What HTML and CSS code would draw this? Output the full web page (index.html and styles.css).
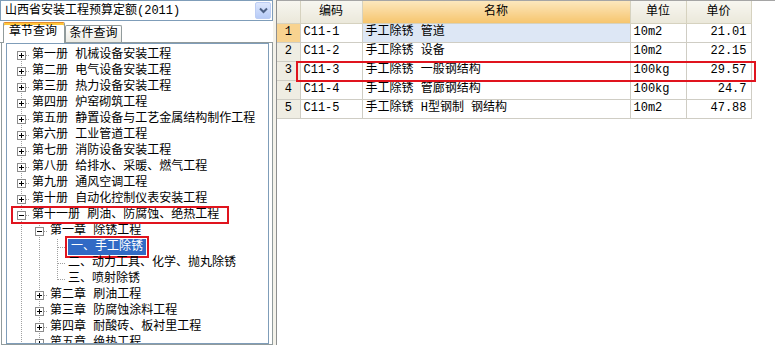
FILE: index.html
```html
<!DOCTYPE html>
<html lang="zh-CN">
<head>
    <meta charset="UTF-8">
    <title>定额查询</title>
    <link rel="stylesheet" href="styles.css">
</head>
<body>
    <svg class="defs" width="0" height="0">
        <defs>
            <symbol id="v" viewBox="0 0 18 16">
                <line class="dot" x1="9.5" y1="0" x2="9.5" y2="16"/>
            </symbol>
            <symbol id="t" viewBox="0 0 18 16">
                <line class="dot" x1="9.5" y1="0" x2="9.5" y2="16"/>
                <line class="dot" x1="10" y1="8.5" x2="18" y2="8.5"/>
            </symbol>
            <symbol id="e" viewBox="0 0 18 16">
                <line class="dot" x1="9.5" y1="0" x2="9.5" y2="9"/>
                <line class="dot" x1="10" y1="8.5" x2="18" y2="8.5"/>
            </symbol>
            <symbol id="fp" viewBox="0 0 18 16">
                <line class="dot" x1="9.5" y1="8" x2="9.5" y2="16"/>
                <line class="dot" x1="10" y1="8.5" x2="18" y2="8.5"/>
                <rect class="box" x="5.5" y="4.5" width="8" height="8"/>
                <line class="sign" x1="7" y1="8.5" x2="12" y2="8.5"/>
                <line class="sign" x1="9.5" y1="6" x2="9.5" y2="11"/>
            </symbol>
            <symbol id="tp" viewBox="0 0 18 16">
                <line class="dot" x1="9.5" y1="0" x2="9.5" y2="16"/>
                <line class="dot" x1="10" y1="8.5" x2="18" y2="8.5"/>
                <rect class="box" x="5.5" y="4.5" width="8" height="8"/>
                <line class="sign" x1="7" y1="8.5" x2="12" y2="8.5"/>
                <line class="sign" x1="9.5" y1="6" x2="9.5" y2="11"/>
            </symbol>
            <symbol id="tm" viewBox="0 0 18 16">
                <line class="dot" x1="9.5" y1="0" x2="9.5" y2="16"/>
                <line class="dot" x1="10" y1="8.5" x2="18" y2="8.5"/>
                <rect class="box" x="5.5" y="4.5" width="8" height="8"/>
                <line class="sign" x1="7" y1="8.5" x2="12" y2="8.5"/>
            </symbol>
        </defs>
    </svg>

    <div class="app">
        <div class="left">
            <div class="combo">
                <span>山西省安装工程预算定额(2011)</span>
                <span class="combo-btn">
                    <svg width="9" height="7" viewBox="0 0 9 7"><polyline points="1,1.5 4.5,5 8,1.5" fill="none" stroke="#4d6185" stroke-width="2"/></svg>
                </span>
            </div>
            <div class="tabs">
                <div class="tab active">章节查询</div>
                <div class="tab">条件查询</div>
            </div>
            <div class="page">
                <div class="tree">
                    <div class="node"><svg class="ln"><use href="#fp"/></svg><span class="label">第一册 机械设备安装工程</span></div>
                    <div class="node"><svg class="ln"><use href="#tp"/></svg><span class="label">第二册 电气设备安装工程</span></div>
                    <div class="node"><svg class="ln"><use href="#tp"/></svg><span class="label">第三册 热力设备安装工程</span></div>
                    <div class="node"><svg class="ln"><use href="#tp"/></svg><span class="label">第四册 炉窑砌筑工程</span></div>
                    <div class="node"><svg class="ln"><use href="#tp"/></svg><span class="label">第五册 静置设备与工艺金属结构制作工程</span></div>
                    <div class="node"><svg class="ln"><use href="#tp"/></svg><span class="label">第六册 工业管道工程</span></div>
                    <div class="node"><svg class="ln"><use href="#tp"/></svg><span class="label">第七册 消防设备安装工程</span></div>
                    <div class="node"><svg class="ln"><use href="#tp"/></svg><span class="label">第八册 给排水、采暖、燃气工程</span></div>
                    <div class="node"><svg class="ln"><use href="#tp"/></svg><span class="label">第九册 通风空调工程</span></div>
                    <div class="node"><svg class="ln"><use href="#tp"/></svg><span class="label">第十册 自动化控制仪表安装工程</span></div>
                    <div class="node mark"><svg class="ln"><use href="#tm"/></svg><span class="label">第十一册 刷油、防腐蚀、绝热工程</span></div>
                    <div class="node"><svg class="ln"><use href="#v"/></svg><svg class="ln"><use href="#tm"/></svg><span class="label">第一章 除锈工程</span></div>
                    <div class="node"><svg class="ln"><use href="#v"/></svg><svg class="ln"><use href="#v"/></svg><svg class="ln"><use href="#t"/></svg><span class="label selected">一、手工除锈</span></div>
                    <div class="node"><svg class="ln"><use href="#v"/></svg><svg class="ln"><use href="#v"/></svg><svg class="ln"><use href="#t"/></svg><span class="label">二、动力工具、化学、抛丸除锈</span></div>
                    <div class="node"><svg class="ln"><use href="#v"/></svg><svg class="ln"><use href="#v"/></svg><svg class="ln"><use href="#e"/></svg><span class="label">三、喷射除锈</span></div>
                    <div class="node"><svg class="ln"><use href="#v"/></svg><svg class="ln"><use href="#tp"/></svg><span class="label">第二章 刷油工程</span></div>
                    <div class="node"><svg class="ln"><use href="#v"/></svg><svg class="ln"><use href="#tp"/></svg><span class="label">第三章 防腐蚀涂料工程</span></div>
                    <div class="node"><svg class="ln"><use href="#v"/></svg><svg class="ln"><use href="#tp"/></svg><span class="label">第四章 耐酸砖、板衬里工程</span></div>
                    <div class="node"><svg class="ln"><use href="#v"/></svg><svg class="ln"><use href="#tp"/></svg><span class="label">第五章 绝热工程</span></div>
                </div>
            </div>
        </div>

        <div class="splitter"></div>

        <div class="right">
            <table class="grid">
                <colgroup>
                    <col class="c-no"><col class="c-code"><col class="c-name"><col class="c-unit"><col class="c-price">
                </colgroup>
                <thead>
                    <tr><th></th><th>编码</th><th class="sorted">名称</th><th>单位</th><th>单价</th></tr>
                </thead>
                <tbody>
                    <tr class="current"><td class="no">1</td><td>C11-1</td><td class="cur">手工除锈 管道</td><td>10m2</td><td class="num">21.01</td></tr>
                    <tr><td class="no">2</td><td>C11-2</td><td>手工除锈 设备</td><td>10m2</td><td class="num">22.15</td></tr>
                    <tr><td class="no">3</td><td>C11-3</td><td>手工除锈 一般钢结构</td><td>100kg</td><td class="num">29.57</td></tr>
                    <tr><td class="no">4</td><td>C11-4</td><td>手工除锈 管廊钢结构</td><td>100kg</td><td class="num">24.7</td></tr>
                    <tr><td class="no">5</td><td>C11-5</td><td>手工除锈 H型钢制 钢结构</td><td>10m2</td><td class="num">47.88</td></tr>
                </tbody>
            </table>
            <div class="mark-box"></div>
        </div>
    </div>
</body>
</html>
```

FILE: styles.css
```css
* {
    box-sizing: border-box;
}
body {
    margin: 0;
    background-color: #fff;
    color: #000;
    font-family: "Liberation Mono", "Noto Sans CJK SC", monospace;
    font-size: 12px;
    line-height: 16px;
    overflow: hidden;
}
.defs {
    position: absolute;
}
.dot {
    stroke: #a0a0a0;
    stroke-width: 1;
    stroke-dasharray: 1 1;
    shape-rendering: crispEdges;
}
.box {
    fill: #fff;
    stroke: #8c8c8c;
    shape-rendering: crispEdges;
}
.sign {
    stroke: #000;
    stroke-width: 1;
    shape-rendering: crispEdges;
}
.app {
    display: flex;
    height: 345px;
}

/* left side */
.left {
    width: 273px;
    display: flex;
    flex-direction: column;
}
.combo {
    height: 21px;
    border: 1px solid #7f9db9;
    display: flex;
    align-items: center;
    justify-content: space-between;
    padding: 0 1px 0 4px;
}
.combo-btn {
    width: 16px;
    height: 17px;
    border: 1px solid #bccdf4;
    border-radius: 2px;
    background: linear-gradient(#dde7fd, #b7cbf7);
    display: flex;
    align-items: center;
    justify-content: center;
}
.tabs {
    margin-top: 1px;
    height: 21px;
    border-bottom: 1px solid #919b9c;
    display: flex;
    align-items: flex-end;
    padding-left: 3px;
}
.tab {
    width: 57px;
    height: 17px;
    border: 1px solid #919b9c;
    border-bottom: none;
    border-radius: 2px 2px 0 0;
    background: linear-gradient(#fff, #ecebe4);
    text-align: center;
    line-height: 16px;
}
.tab.active {
    width: 62px;
    height: 21px;
    margin-bottom: -1px;
    background: #fff;
    border-top: 1px solid #e68b2c;
    box-shadow: inset 0 2px #ffc73c;
    text-align: left;
    padding-left: 5px;
    line-height: 19px;
}
.page {
    flex: 1;
    display: flex;
    flex-direction: column;
    margin-left: 1px;
    border: 1px solid #919b9c;
    border-top: none;
    padding: 0 3px 0 4px;
    min-height: 0;
}
.tree {
    flex: 1;
    border: 1px solid #7f9db9;
    padding: 3px 0 0 5px;
    overflow: hidden;
}
.node {
    display: flex;
    height: 16px;
    width: fit-content;
}
.ln {
    width: 18px;
    height: 16px;
    flex-shrink: 0;
}
.label {
    padding: 0 2px;
    white-space: nowrap;
    height: 16px;
}
.node.mark {
    outline: 2px solid #e0141e;
    outline-offset: -1px;
}
.node.mark .label {
    padding-right: 9px;
}
.label.selected {
    margin-left: 2px;
    padding: 0 3px;
    background-color: #316ac5;
    color: #fff;
    outline: 2px solid #e0141e;
    outline-offset: 1px;
}

/* splitter and right side */
.splitter {
    width: 3px;
    background-color: #f4f2ea;
}
.right {
    flex: 1;
    position: relative;
    border-left: 1px solid #8e8f8f;
    border-top: 1px solid #a5a5a5;
}
.grid {
    border-collapse: collapse;
    table-layout: fixed;
    width: 474px;
}
.c-no { width: 23px; }
.c-code { width: 62px; }
.c-name { width: 268px; }
.c-unit { width: 56px; }
.c-price { width: 65px; }
.grid th {
    height: 22px;
    font-weight: normal;
    background: linear-gradient(#f7f6f0, #ebe8da);
    border: 1px solid #d6d2bf;
    border-top: none;
    text-align: center;
    padding: 0;
}
.grid th:first-child {
    border-left: none;
}
.grid th.sorted {
    background: linear-gradient(#fce7bd, #f6c56e);
}
.grid td {
    height: 19px;
    border: 1px solid #cfcdc4;
    padding: 0 3px;
    white-space: nowrap;
    line-height: 17px;
}
.grid td.no {
    border-left: none;
    background-color: #efede3;
    text-align: center;
    padding: 0;
}
.grid tr.current td.no {
    background-color: #f8d390;
}
.grid td.cur {
    background-color: #dde7f5;
}
.grid td.num {
    text-align: right;
    padding-right: 4px;
}
.mark-box {
    position: absolute;
    left: 19px;
    top: 60px;
    width: 460px;
    height: 21px;
    border: 2px solid #e0141e;
}
```
